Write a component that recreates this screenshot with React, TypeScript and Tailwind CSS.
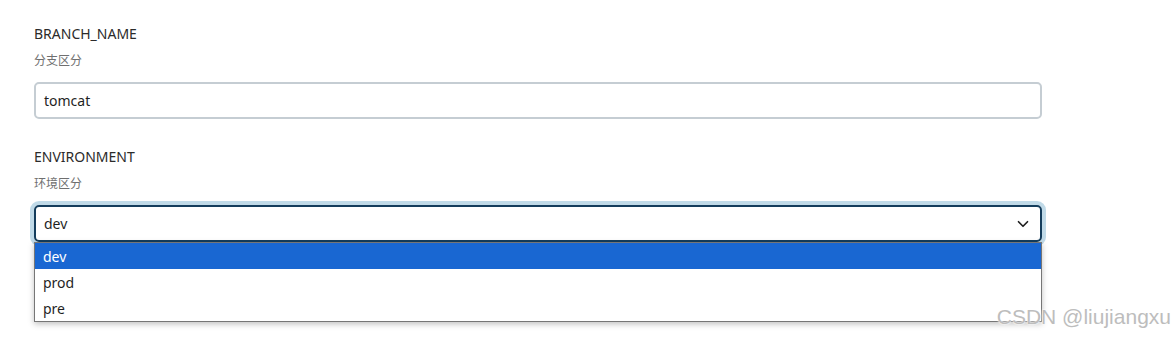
import { ChevronDown } from "lucide-react";

const font = { fontFamily: '"Noto Sans", "Noto Sans CJK SC", sans-serif' };

export default function App() {
  const opts = ["dev", "prod", "pre"];
  return (
    <div className="relative w-[1176px] h-[338px] bg-white overflow-hidden" style={font}>
      <div className="w-[1008px] ml-[34px] pt-[24px]">
        <Field name="BRANCH_NAME" desc="分支区分">
          <div className="h-[37px] border-2 border-[#c5cdd3] rounded-[5px] flex items-center px-[8px] text-[14px] text-[#1f1f1f]">
            tomcat
          </div>
        </Field>

        <div className="mt-[28px]">
          <Field name="ENVIRONMENT" desc="环境区分">
            <div className="relative">
              <div className="h-[37px] border-2 border-[#143d5c] rounded-[5px] ring-4 ring-[#c0dae8] flex items-center justify-between pl-[8px] pr-[8px] text-[14px] text-[#1f1f1f]">
                <span>dev</span>
                <ChevronDown size={18} strokeWidth={2.25} className="text-[#1f1f1f]" />
              </div>
              <ul className="absolute left-0 right-0 top-[37px] bg-white border border-[#767676] shadow-[0_2px_6px_rgba(0,0,0,0.25)] text-[14px] z-10">
                {opts.map((o, i) => (
                  <li
                    key={o}
                    className={
                      "h-[26px] flex items-center pl-[8px] " +
                      (i === 0 ? "bg-[#1967d2] text-white" : "text-[#1f1f1f]")
                    }
                  >
                    {o}
                  </li>
                ))}
              </ul>
            </div>
          </Field>
        </div>
      </div>

      <div
        className="absolute right-[5px] top-[304px] text-[21px] leading-[26px] text-[#bdbdbd] z-20"
        style={{ fontFamily: '"Liberation Sans", Arial, sans-serif', textShadow: "0 0 2px #fff, 0 0 2px #fff" }}
      >
        CSDN @liujiangxu
      </div>
    </div>
  );
}

function Field({ name, desc, children }: { name: string; desc: string; children: React.ReactNode }) {
  return (
    <div>
      <div className="text-[14px] leading-[20px] text-[#2b2b2b]">{name}</div>
      <div className="text-[12px] leading-[18px] mt-[8px] mb-[12px] text-[#6f6f6f]">{desc}</div>
      {children}
    </div>
  );
}
